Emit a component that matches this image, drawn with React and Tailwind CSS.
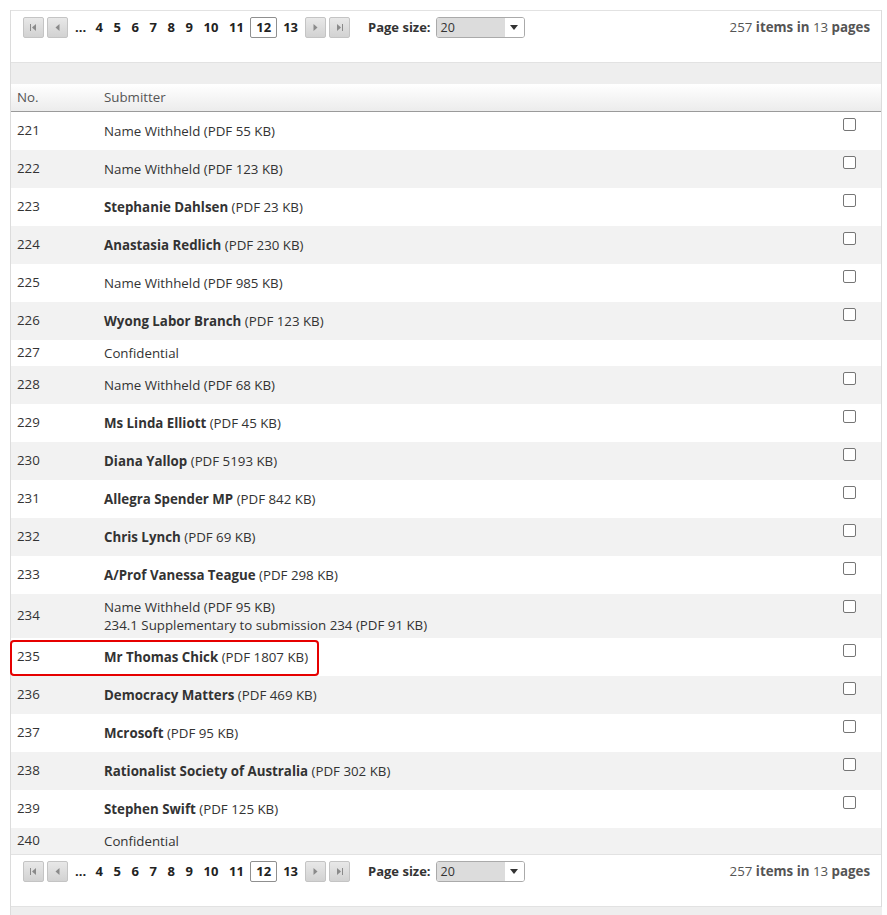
import React from "react";

const rows = [
  { no: 221, name: "Name Withheld", bold: false, size: "55 KB" },
  { no: 222, name: "Name Withheld", bold: false, size: "123 KB" },
  { no: 223, name: "Stephanie Dahlsen", bold: true, size: "23 KB" },
  { no: 224, name: "Anastasia Redlich", bold: true, size: "230 KB" },
  { no: 225, name: "Name Withheld", bold: false, size: "985 KB" },
  { no: 226, name: "Wyong Labor Branch", bold: true, size: "123 KB" },
  { no: 227, confidential: true },
  { no: 228, name: "Name Withheld", bold: false, size: "68 KB" },
  { no: 229, name: "Ms Linda Elliott", bold: true, size: "45 KB" },
  { no: 230, name: "Diana Yallop", bold: true, size: "5193 KB" },
  { no: 231, name: "Allegra Spender MP", bold: true, size: "842 KB" },
  { no: 232, name: "Chris Lynch", bold: true, size: "69 KB" },
  { no: 233, name: "A/Prof Vanessa Teague", bold: true, size: "298 KB" },
  {
    no: 234,
    name: "Name Withheld",
    bold: false,
    size: "95 KB",
    extra: "234.1 Supplementary to submission 234 (PDF 91 KB)",
  },
  { no: 235, name: "Mr Thomas Chick", bold: true, size: "1807 KB", marked: true },
  { no: 236, name: "Democracy Matters", bold: true, size: "469 KB" },
  { no: 237, name: "Mcrosoft", bold: true, size: "95 KB" },
  { no: 238, name: "Rationalist Society of Australia", bold: true, size: "302 KB" },
  { no: 239, name: "Stephen Swift", bold: true, size: "125 KB" },
  { no: 240, confidential: true },
];

// Small grey arrow buttons used by the pager
function NavButton({ kind }) {
  return (
    <span className="inline-flex w-[21px] h-[21px] items-center justify-center border border-[#c4c4c4] rounded-[2px] bg-gradient-to-b from-[#e8e8e8] to-[#d2d2d2]">
      <svg width="9" height="9" viewBox="0 0 9 9" fill="#8a8a8a">
        {kind === "first" && (
          <>
            <rect x="1" y="1" width="1" height="7" />
            <path d="M7 1 L3 4.5 L7 8 Z" />
          </>
        )}
        {kind === "prev" && <path d="M6.5 1 L2.5 4.5 L6.5 8 Z" />}
        {kind === "next" && <path d="M2.5 1 L6.5 4.5 L2.5 8 Z" />}
        {kind === "last" && (
          <>
            <path d="M2 1 L6 4.5 L2 8 Z" />
            <rect x="7" y="1" width="1" height="7" />
          </>
        )}
      </svg>
    </span>
  );
}

function Pager({ topBorder }) {
  const pages = [4, 5, 6, 7, 8, 9, 10, 11];
  return (
    <div
      className={`h-[53px] bg-white border-b border-[#e2e2e2] flex items-start pt-[6px] pl-[12px] pr-[11px] ${topBorder}`}
    >
      <div className="flex items-center gap-[3px]">
        <NavButton kind="first" />
        <NavButton kind="prev" />
      </div>
      <div className="flex items-center h-[21px] ml-[3px] font-bold text-[#222] text-[13px]">
        <span className="px-[4px]">...</span>
        {pages.map((p) => (
          <span key={p} className="px-[5.3px]">
            {p}
          </span>
        ))}
        <span className="mx-[1px] px-[5px] h-[21px] leading-[19px] border border-[#8f8f8f] rounded-[2px]">
          12
        </span>
        <span className="px-[5px]">13</span>
      </div>
      <div className="flex items-center gap-[3px] ml-[2px]">
        <NavButton kind="next" />
        <NavButton kind="last" />
      </div>
      <div className="flex items-center h-[21px] ml-[18px] text-[13px]">
        <span className="font-bold text-[#333]">Page size:</span>
        <span className="ml-[5px] flex w-[89px] h-[21px] border border-[#aaa] rounded-[3px] overflow-hidden">
          <span className="w-[68px] bg-[#dcdcdc] pl-[4px] leading-[19px] text-[12.5px] text-[#333]">
            20
          </span>
          <span className="flex-1 bg-white flex items-center justify-center">
            <svg width="8" height="5" viewBox="0 0 8 5" fill="#333">
              <path d="M0 0 L8 0 L4 5 Z" />
            </svg>
          </span>
        </span>
      </div>
      <div className="ml-auto h-[21px] flex items-center text-[13.3px] text-[#555]">
        257&nbsp;<b>items in</b>&nbsp;13&nbsp;<b>pages</b>
      </div>
    </div>
  );
}

function Checkbox() {
  return (
    <span className="block w-[13px] h-[13px] border border-[#767676] rounded-[2px] bg-white" />
  );
}

export default function App() {
  return (
    <div
      className="bg-white min-h-[915px] pt-[10px] text-[13.3px] text-[#333]"
      style={{ fontFamily: '"Open Sans", "Noto Sans", sans-serif' }}
    >
      <div className="ml-[10px] w-[872px] border-l border-r border-[#dcdcdc]">
        <Pager topBorder="border-t border-[#cfcfcf]" />
        <div className="h-[21px] bg-[#eeeeee]" />
        {/* header */}
        <div className="h-[28px] flex items-center bg-gradient-to-b from-[#ffffff] to-[#ececec] border-b border-[#9a9a9a] text-[#555]">
          <span className="w-[93px] pl-[6px]">No.</span>
          <span>Submitter</span>
        </div>
        {/* rows */}
        {rows.map((r) => {
          const h = r.confidential ? "h-[26px]" : r.extra ? "h-[44px]" : "h-[38px]";
          const bg = r.no % 2 === 0 ? "bg-[#f2f2f2]" : "bg-white";
          return (
            <div key={r.no} className={`relative flex items-center ${h} ${bg}`}>
              <span className="w-[93px] pl-[6px]">{r.no}</span>
              <div className="flex-1 leading-[18px]">
                {r.confidential ? (
                  "Confidential"
                ) : (
                  <>
                    <div>
                      <span className={r.bold ? "font-bold" : ""}>{r.name}</span> (PDF {r.size})
                    </div>
                    {r.extra && <div>{r.extra}</div>}
                  </>
                )}
              </div>
              {!r.confidential && (
                <div className="self-start pt-[6px] w-[38px]">
                  <Checkbox />
                </div>
              )}
              {r.marked && (
                <div className="absolute left-[-1px] top-[2px] w-[309px] h-[36px] border-2 border-[#e60000] rounded-[4px]" />
              )}
            </div>
          );
        })}
        <Pager topBorder="border-t border-[#9a9a9a]" />
      </div>
      <div className="ml-[10px] w-[872px] h-[8px] bg-[#eeeeee] border-l border-[#dcdcdc]" />
    </div>
  );
}
